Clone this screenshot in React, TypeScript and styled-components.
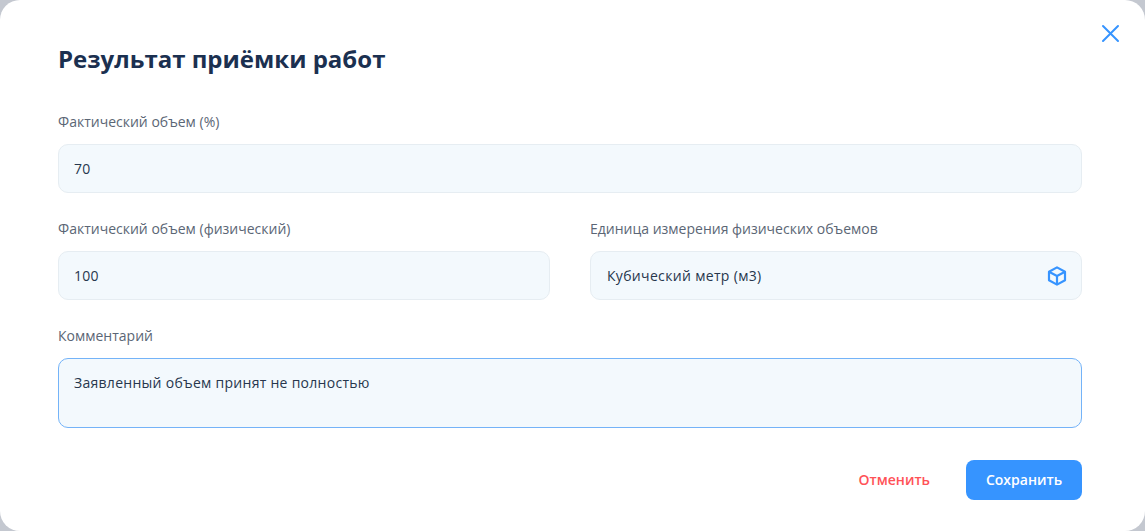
import styled, { createGlobalStyle } from 'styled-components';

const GlobalStyle = createGlobalStyle`
  html, body {
    margin: 0;
    padding: 0;
    height: 100%;
    background: #c4c8d0;
    overflow: hidden;
  }
  * {
    box-sizing: border-box;
  }
`;

const Modal = styled.div`
  position: relative;
  width: 1145px;
  height: 531px;
  padding: 39px 63px 0 58px;
  background: #fff;
  border-radius: 20px;
  font-family: 'Open Sans', 'Noto Sans', sans-serif;
  color: #1b3050;
`;

const CloseButton = styled.button`
  position: absolute;
  top: 23px;
  right: 25px;
  width: 20px;
  height: 20px;
  padding: 0;
  border: 0;
  background: none;
  color: #3694ff;
  cursor: pointer;

  svg {
    display: block;
  }
`;

const Title = styled.h2`
  margin: 0 0 33px;
  font-size: 24px;
  line-height: 40px;
  font-weight: 700;
  color: #1b3050;
`;

const Form = styled.form`
  display: flex;
  flex-direction: column;
  gap: 26px;
`;

const Row = styled.div`
  display: grid;
  grid-template-columns: 1fr 1fr;
  gap: 40px;
`;

const Field = styled.label`
  display: flex;
  flex-direction: column;
  gap: 12px;
`;

const Label = styled.span`
  font-size: 14px;
  line-height: 20px;
  color: #5b6675;
`;

const InputWrap = styled.div`
  position: relative;
  display: flex;
`;

const Input = styled.input<{ $select?: boolean }>`
  width: 100%;
  height: 49px;
  padding: 0 ${(p) => (p.$select ? '44px' : '15px')} 0 ${(p) => (p.$select ? '16px' : '15px')};
  background: #f3f9fd;
  border: 1px solid #e6edf2;
  border-radius: 10px;
  font: 400 14px/20px 'Open Sans', 'Noto Sans', sans-serif;
  letter-spacing: ${(p) => (p.$select ? '0.33px' : '0.28px')};
  color: #27374d;
  outline: none;
`;

const TextArea = styled.textarea`
  display: block;
  width: 100%;
  height: 70px;
  padding: 14px 15px;
  background: #f3f9fd;
  border: 1px solid #74b3f8;
  border-radius: 10px;
  font: 400 14px/20px 'Open Sans', 'Noto Sans', sans-serif;
  letter-spacing: 0.28px;
  color: #27374d;
  outline: none;
  resize: none;
`;

const InputIcon = styled.span`
  position: absolute;
  top: 15px;
  right: 15px;
  width: 20px;
  height: 20px;
  color: #3694ff;

  svg {
    display: block;
  }
`;

const Footer = styled.div`
  display: flex;
  justify-content: flex-end;
  align-items: center;
  gap: 36px;
  margin-top: 32px;
`;

const CancelButton = styled.button`
  padding: 0;
  border: 0;
  background: none;
  font: 600 14px/20px 'Open Sans', 'Noto Sans', sans-serif;
  color: #ff5257;
  cursor: pointer;
`;

const SaveButton = styled.button`
  width: 116px;
  height: 40px;
  border: 0;
  border-radius: 8px;
  background: #3694ff;
  font: 600 14px/20px 'Open Sans', 'Noto Sans', sans-serif;
  color: #fff;
  cursor: pointer;
`;

function App() {
  return (
    <>
      <GlobalStyle />
      <Modal>
        <CloseButton type="button" aria-label="Закрыть">
          <svg width="20" height="20" viewBox="0 0 20 20" fill="none" stroke="currentColor" strokeWidth="2" strokeLinecap="round">
            <path d="M3 3l15 15M18 3L3 18" />
          </svg>
        </CloseButton>
        <Title>Результат приёмки работ</Title>
        <Form>
          <Field>
            <Label>Фактический объем (%)</Label>
            <Input defaultValue="70" />
          </Field>
          <Row>
            <Field>
              <Label>Фактический объем (физический)</Label>
              <Input defaultValue="100" />
            </Field>
            <Field>
              <Label>Единица измерения физических объемов</Label>
              <InputWrap>
                <Input $select defaultValue="Кубический метр (м3)" />
                <InputIcon>
                  <svg width="20" height="20" viewBox="0 0 20 20" fill="none" stroke="currentColor" strokeWidth="2.200" strokeLinejoin="round">
                    <path d="M10 1.400l8 4.400v8.400l-8 4.400-8-4.400V5.800z" />
                    <path d="M2 5.800L10 10l8-4.200M10 10v8.600" />
                  </svg>
                </InputIcon>
              </InputWrap>
            </Field>
          </Row>
          <Field>
            <Label>Комментарий</Label>
            <TextArea defaultValue="Заявленный объем принят не полностью" />
          </Field>
        </Form>
        <Footer>
          <CancelButton type="button">Отменить</CancelButton>
          <SaveButton type="button">Сохранить</SaveButton>
        </Footer>
      </Modal>
    </>
  );
}

export default App;
